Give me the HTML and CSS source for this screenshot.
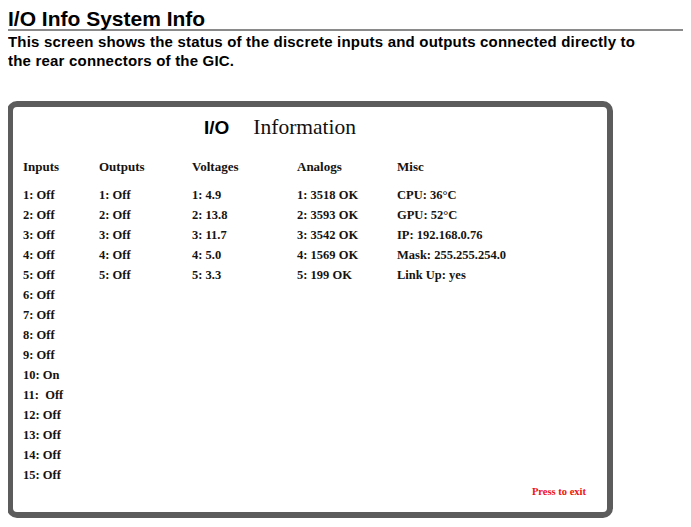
FILE: index.html
```html
<!DOCTYPE html>
<html>
<head>
<meta charset="utf-8">
<title>I/O Info System Info</title>
<link rel="stylesheet" href="styles.css">
</head>
<body>
<h1 class="page-title">I/O Info System Info</h1>
<p class="intro">This screen shows the status of the discrete inputs and outputs connected directly to the rear connectors of the GIC.</p>

<section class="panel">
  <h2 class="panel-title"><span class="io">I/O</span><span class="info">Information</span></h2>
  <div class="columns">
    <div class="col">
      <div class="col-head">Inputs</div>
      <ul class="rows">
        <li>1: Off</li><li>2: Off</li><li>3: Off</li><li>4: Off</li><li>5: Off</li>
        <li>6: Off</li><li>7: Off</li><li>8: Off</li><li>9: Off</li><li>10: On</li>
        <li>11: &nbsp;Off</li><li>12: Off</li><li>13: Off</li><li>14: Off</li><li>15: Off</li>
      </ul>
    </div>
    <div class="col">
      <div class="col-head">Outputs</div>
      <ul class="rows">
        <li>1: Off</li><li>2: Off</li><li>3: Off</li><li>4: Off</li><li>5: Off</li>
      </ul>
    </div>
    <div class="col">
      <div class="col-head">Voltages</div>
      <ul class="rows">
        <li>1: 4.9</li><li>2: 13.8</li><li>3: 11.7</li><li>4: 5.0</li><li>5: 3.3</li>
      </ul>
    </div>
    <div class="col">
      <div class="col-head">Analogs</div>
      <ul class="rows">
        <li>1: 3518 OK</li><li>2: 3593 OK</li><li>3: 3542 OK</li><li>4: 1569 OK</li><li>5: 199 OK</li>
      </ul>
    </div>
    <div class="col">
      <div class="col-head">Misc</div>
      <ul class="rows">
        <li>CPU: 36°C</li><li>GPU: 52°C</li><li>IP: 192.168.0.76</li><li>Mask: 255.255.254.0</li><li>Link Up: yes</li>
      </ul>
    </div>
  </div>
  <div class="panel-foot"><span class="exit">Press to exit</span></div>
</section>
</body>
</html>
```

FILE: styles.css
```css
html, body {
  background: #ffffff;
}
body {
  margin: 8px;
  font-family: "Liberation Sans", Arial, sans-serif;
  color: #000;
}
.page-title {
  margin: 0;
  font-size: 21px;
  line-height: 21px;
  font-weight: bold;
  border-bottom: 2px solid #8a8a8a;
}
.intro {
  margin: 1px 0 0 0;
  max-width: 645px;
  font-size: 15px;
  line-height: 19px;
  font-weight: bold;
  letter-spacing: 0.2px;
}
.panel {
  box-sizing: border-box;
  margin: 31px 0 0 -1px;
  width: 606px;
  border: 6px solid #5c5c5c;
  border-radius: 10px;
  padding: 8px 0 13px 10px;
  display: flex;
  flex-direction: column;
  font-family: "Liberation Serif", "Times New Roman", serif;
  color: #161310;
}
.panel-title {
  margin: 0 0 17px 181px;
  font-weight: normal;
  line-height: 24px;
  display: flex;
  align-items: baseline;
  gap: 24px;
}
.io {
  font-family: "Liberation Sans", Arial, sans-serif;
  font-weight: bold;
  font-size: 19px;
  color: #000;
}
.info {
  font-size: 21.5px;
  color: #111;
}
.columns {
  display: grid;
  grid-template-columns: 76px 93px 105px 100px auto;
}
.col {
  display: flex;
  flex-direction: column;
  gap: 8px;
}
.col-head {
  font-size: 13px;
  line-height: 20px;
  font-weight: bold;
}
.rows {
  list-style: none;
  margin: 0;
  padding: 0;
}
.rows li {
  font-size: 12.5px;
  line-height: 20px;
  font-weight: bold;
  white-space: nowrap;
}
.panel-foot {
  display: flex;
  justify-content: flex-end;
  padding-right: 21px;
}
.exit {
  color: #ee1111;
  font-size: 10.5px;
  line-height: 14px;
  font-weight: bold;
}
```
